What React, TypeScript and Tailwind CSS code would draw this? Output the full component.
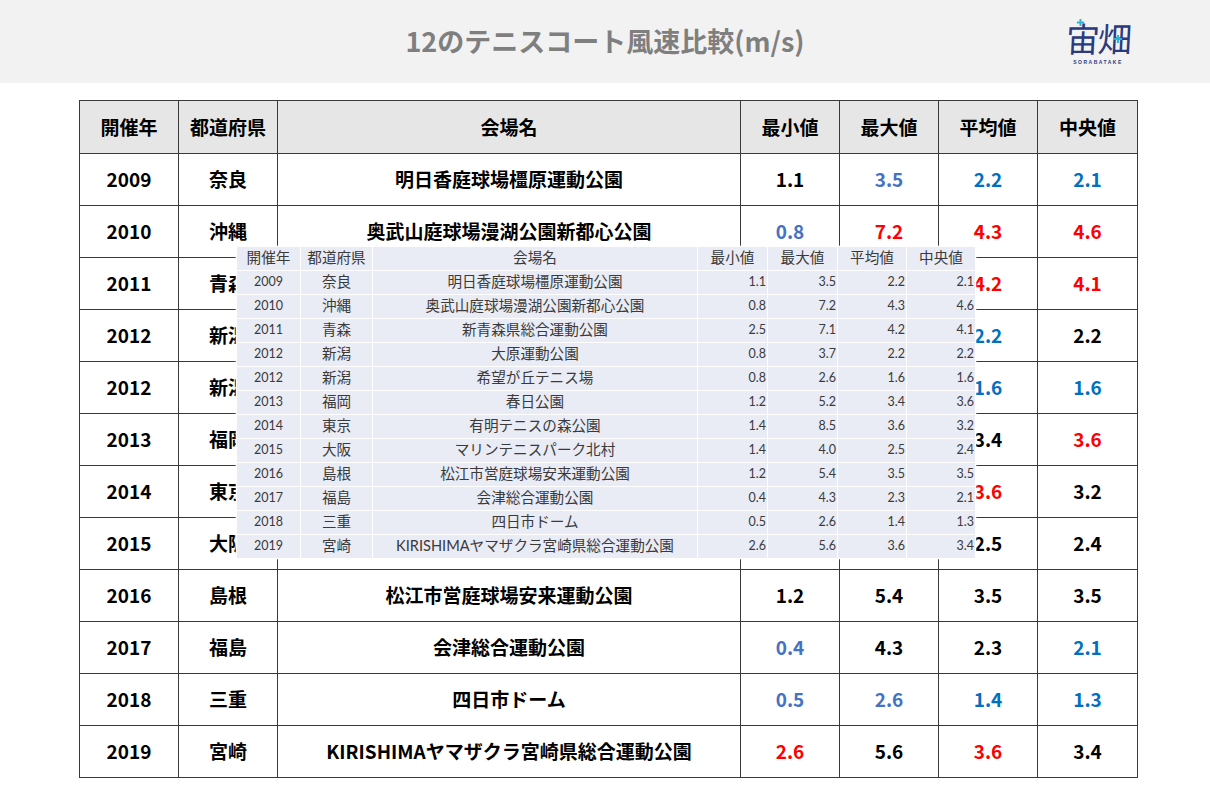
import React from "react";

type Row = {
  year: string;
  pref: string;
  venue: string;
  vals: [string, string, string, string];
  colors: [string, string, string, string];
};

const K = "text-black";
const LB = "text-[#4472c4]";
const B = "text-[#0070c0]";
const R = "text-[#ff0000]";

const rows: Row[] = [
  { year: "2009", pref: "奈良", venue: "明日香庭球場橿原運動公園", vals: ["1.1", "3.5", "2.2", "2.1"], colors: [K, LB, B, B] },
  { year: "2010", pref: "沖縄", venue: "奥武山庭球場漫湖公園新都心公園", vals: ["0.8", "7.2", "4.3", "4.6"], colors: [LB, R, R, R] },
  { year: "2011", pref: "青森", venue: "新青森県総合運動公園", vals: ["2.5", "7.1", "4.2", "4.1"], colors: [K, R, R, R] },
  { year: "2012", pref: "新潟", venue: "大原運動公園", vals: ["0.8", "3.7", "2.2", "2.2"], colors: [LB, K, B, K] },
  { year: "2012", pref: "新潟", venue: "希望が丘テニス場", vals: ["0.8", "2.6", "1.6", "1.6"], colors: [LB, LB, B, B] },
  { year: "2013", pref: "福岡", venue: "春日公園", vals: ["1.2", "5.2", "3.4", "3.6"], colors: [K, K, K, R] },
  { year: "2014", pref: "東京", venue: "有明テニスの森公園", vals: ["1.4", "8.5", "3.6", "3.2"], colors: [K, R, R, K] },
  { year: "2015", pref: "大阪", venue: "マリンテニスパーク北村", vals: ["1.4", "4.0", "2.5", "2.4"], colors: [K, K, K, K] },
  { year: "2016", pref: "島根", venue: "松江市営庭球場安来運動公園", vals: ["1.2", "5.4", "3.5", "3.5"], colors: [K, K, K, K] },
  { year: "2017", pref: "福島", venue: "会津総合運動公園", vals: ["0.4", "4.3", "2.3", "2.1"], colors: [LB, K, K, B] },
  { year: "2018", pref: "三重", venue: "四日市ドーム", vals: ["0.5", "2.6", "1.4", "1.3"], colors: [LB, LB, B, B] },
  { year: "2019", pref: "宮崎", venue: "KIRISHIMAヤマザクラ宮崎県総合運動公園", vals: ["2.6", "5.6", "3.6", "3.4"], colors: [R, K, R, K] },
];

const heads = ["開催年", "都道府県", "会場名", "最小値", "最大値", "平均値", "中央値"];

const Cross = ({ className }: { className: string }) => (
  <svg viewBox="0 0 10 10" className={className}>
    <path d="M5 1v8M1 5h8" stroke="#29b6d8" strokeWidth="2.2" />
  </svg>
);

const Logo = () => (
  <div className="flex flex-col items-center">
    <div className="relative leading-none">
      <span className="block text-[34px] font-normal tracking-[-2px] text-[#2b3a80] [font-family:'Noto_Sans_CJK_JP',sans-serif] -skew-x-3">
        宙畑
      </span>
      <Cross className="absolute -top-[3px] left-[10px] w-[9px] h-[9px]" />
      <Cross className="absolute top-[13px] right-[7px] w-[10px] h-[10px]" />
    </div>
    <span className="mt-[4px] text-[5px] font-bold tracking-[1.5px] text-[#2b3a80] [font-family:'Liberation_Sans',sans-serif]">
      SORABATAKE
    </span>
  </div>
);

const MainTable = () => (
  <table className="w-[1058px] table-fixed border-collapse text-[19px] font-bold text-black [font-family:'Noto_Sans_CJK_JP',sans-serif]">
    <colgroup>
      <col className="w-[99px]" />
      <col className="w-[99px]" />
      <col className="w-[463px]" />
      <col className="w-[99px]" />
      <col className="w-[99px]" />
      <col className="w-[99px]" />
      <col className="w-[100px]" />
    </colgroup>
    <thead>
      <tr className="h-[53px] bg-[#e7e6e6]">
        {heads.map((h) => (
          <th key={h} className="border border-[#3a3a3a] text-center font-bold">
            {h}
          </th>
        ))}
      </tr>
    </thead>
    <tbody>
      {rows.map((r, i) => (
        <tr key={i} className="h-[52px]">
          <td className="border border-[#3a3a3a] text-center">{r.year}</td>
          <td className="border border-[#3a3a3a] text-center">{r.pref}</td>
          <td className="border border-[#3a3a3a] text-center">{r.venue}</td>
          {r.vals.map((v, j) => (
            <td key={j} className={`border border-[#3a3a3a] text-center ${r.colors[j]}`}>
              {v}
            </td>
          ))}
        </tr>
      ))}
    </tbody>
  </table>
);

const PastedTable = () => (
  <table className="w-[739px] table-fixed border-collapse bg-[#e9ebf5] text-[14.6px] text-[#3a3a3a] [font-family:Lato,'Noto_Sans_CJK_JP',sans-serif]">
    <colgroup>
      <col className="w-[64px]" />
      <col className="w-[72px]" />
      <col className="w-[325px]" />
      <col className="w-[70px]" />
      <col className="w-[70px]" />
      <col className="w-[69px]" />
      <col className="w-[69px]" />
    </colgroup>
    <thead>
      <tr className="h-[24px]">
        {heads.map((h) => (
          <th key={h} className="border border-white font-normal text-center leading-none">
            {h}
          </th>
        ))}
      </tr>
    </thead>
    <tbody>
      {rows.map((r, i) => (
        <tr key={i} className="h-[24px]">
          <td className="border border-white text-center text-[12.5px] leading-none">{r.year}</td>
          <td className="border border-white text-center leading-none">{r.pref}</td>
          <td className="border border-white text-center leading-none">{r.venue}</td>
          {r.vals.map((v, j) => (
            <td key={j} className="border border-white pr-[1px] text-right text-[12.5px] leading-none">
              {v}
            </td>
          ))}
        </tr>
      ))}
    </tbody>
  </table>
);

export default function App() {
  return (
    <div className="w-[1210px] min-h-[805px] bg-white">
      <header className="grid h-[83px] grid-cols-[1fr_auto_1fr] items-center bg-[#f2f2f2]">
        <div />
        <h1 className="text-[27px] font-bold text-[#7f7f7f] [font-family:'Noto_Sans_CJK_JP',sans-serif]">
          12のテニスコート風速比較(m/s)
        </h1>
        <div className="flex justify-end pr-[80px] pt-[4px]">
          <Logo />
        </div>
      </header>
      <div className="relative ml-[79px] mt-[17px] w-[1058px]">
        <MainTable />
        <div className="absolute left-[157px] top-[146px] shadow-[0_0_2px_rgba(255,255,255,0.9)]">
          <PastedTable />
        </div>
      </div>
    </div>
  );
}
